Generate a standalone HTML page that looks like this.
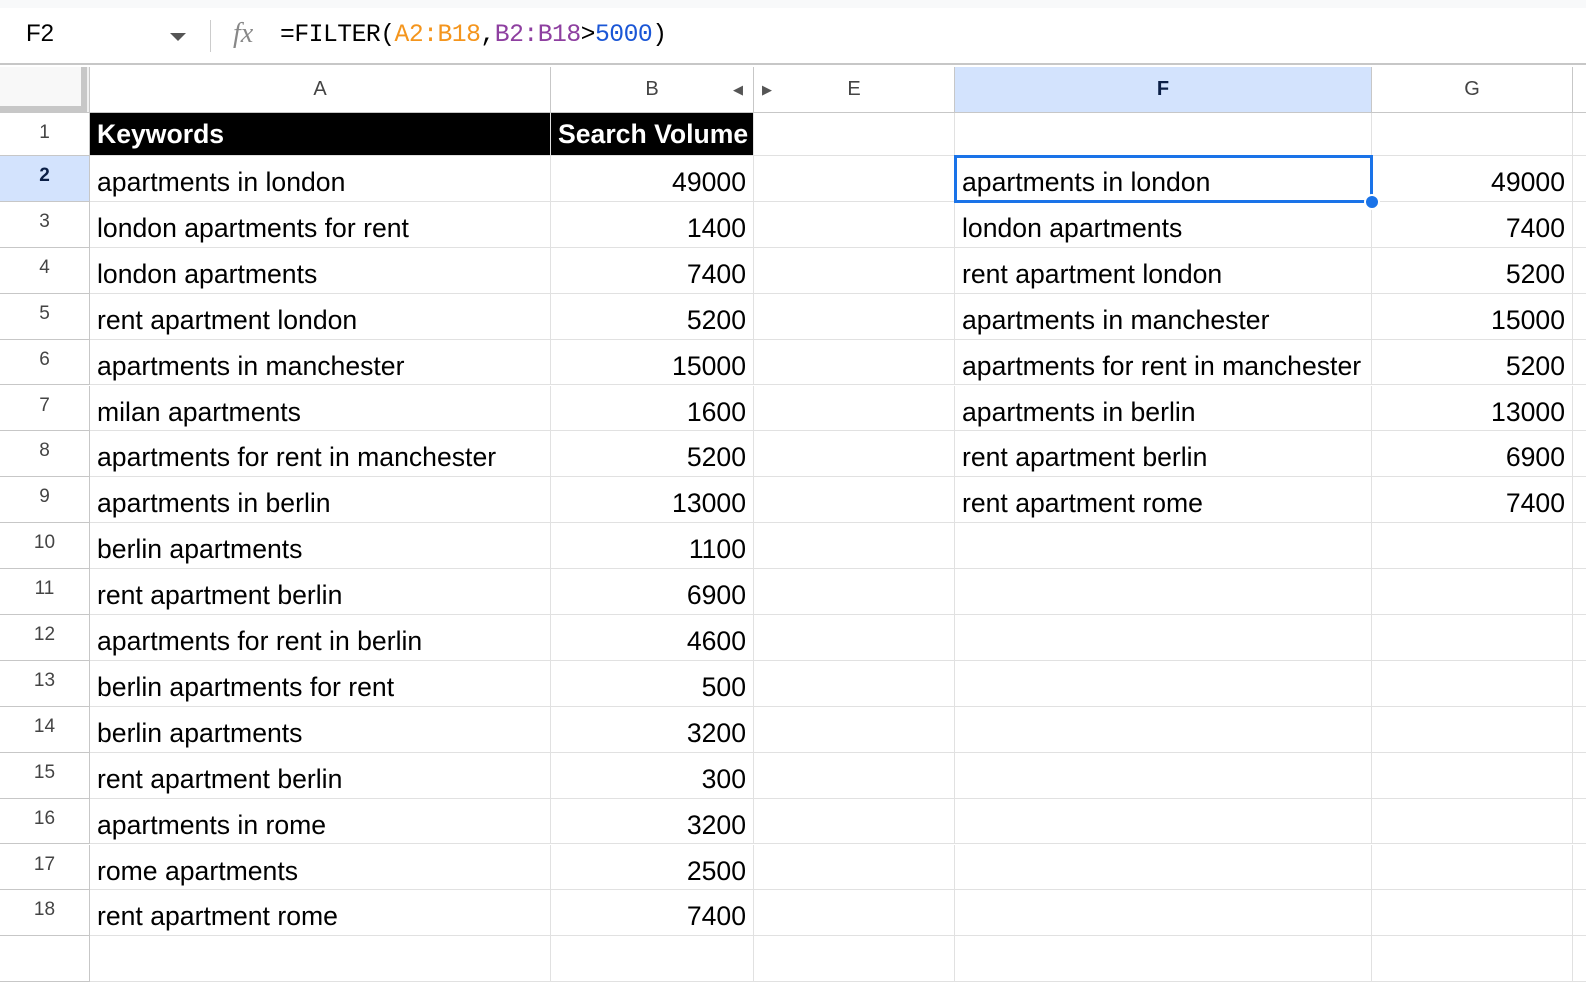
<!DOCTYPE html>
<html><head><meta charset="utf-8"><style>
*{margin:0;padding:0;box-sizing:border-box}
body{width:1586px;height:946px;overflow:hidden;background:#fff;font-family:"Liberation Sans",Arial,sans-serif;position:relative}
.top{position:absolute;left:0;top:0;width:1586px;height:8px;background:#f8f9fa}
.fbar{position:absolute;left:0;top:8px;width:1586px;height:57px;border-bottom:2px solid #c7c7c7}
.hdr{position:absolute;top:67px;height:46px;border-right:1px solid #c7c7c7;border-bottom:1px solid #c7c7c7;color:#444;font-size:20px;text-align:center;line-height:45px;background:#fff}
.cell{position:absolute;border-right:1px solid #e1e1e1;border-bottom:1px solid #e1e1e1;font-size:26.6px;color:#000;white-space:nowrap;overflow:hidden;padding:0 7px;line-height:52px}
.rn{position:absolute;left:0;width:90px;border-right:1px solid #c7c7c7;border-bottom:1px solid #c7c7c7;font-size:19px;color:#444;text-align:center;line-height:40px}
.r{text-align:right}
</style></head><body>
<div class="top"></div>
<div class="fbar">
<div style="position:absolute;left:26px;top:12px;font-size:24px;color:#000">F2</div>
<div style="position:absolute;left:170px;top:25px;width:0;height:0;border-left:8px solid transparent;border-right:8px solid transparent;border-top:8px solid #555"></div>
<div style="position:absolute;left:210px;top:12px;width:1px;height:32px;background:#ccc"></div>
<div style="position:absolute;left:233px;top:10px;font-family:'Liberation Serif',serif;font-style:italic;font-size:28px;color:#888">fx</div>
<div style="position:absolute;left:280px;top:13px;font-family:'Liberation Mono',monospace;font-size:24.7px;color:#000;letter-spacing:-0.5px">=FILTER(<span style="color:#f4951d">A2:B18</span>,<span style="color:#8e3fa0">B2:B18</span>&gt;<span style="color:#1a56d6">5000</span>)</div>
</div>
<div style="position:absolute;left:0;top:67px;width:90px;height:46px;background:#f1f1f1;border-right:1px solid #c7c7c7;border-bottom:1px solid #c7c7c7"><div style="position:absolute;left:0;top:0;background:#f8f8f8;border-right:6px solid #c7c7c7;border-bottom:6px solid #c7c7c7;width:87px;height:45px"></div></div>
<div class="hdr" style="left:90px;width:461px">A</div>
<div class="hdr" style="left:551px;width:203px">B<span style="position:absolute;right:10px;top:0;font-size:13px;color:#555">◀</span></div>
<div class="hdr" style="left:754px;width:201px">E<span style="position:absolute;left:8px;top:0;font-size:13px;color:#555">▶</span></div>
<div class="hdr" style="left:955px;width:417px;background:#d3e3fd;color:#0b1f46;font-weight:bold">F</div>
<div class="hdr" style="left:1372px;width:201px">G</div>
<div class="hdr" style="left:1573px;width:13px;border-right:none"></div>
<div id="g"></div>
<script>
var A=[["apartments in london",49000],["london apartments for rent",1400],["london apartments",7400],["rent apartment london",5200],["apartments in manchester",15000],["milan apartments",1600],["apartments for rent in manchester",5200],["apartments in berlin",13000],["berlin apartments",1100],["rent apartment berlin",6900],["apartments for rent in berlin",4600],["berlin apartments for rent",500],["berlin apartments",3200],["rent apartment berlin",300],["apartments in rome",3200],["rome apartments",2500],["rent apartment rome",7400]];
var F=[["apartments in london",49000],["london apartments",7400],["rent apartment london",5200],["apartments in manchester",15000],["apartments for rent in manchester",5200],["apartments in berlin",13000],["rent apartment berlin",6900],["rent apartment rome",7400]];
var h="";
function row(i,top,ht){
 var sel=i==2;
 h+='<div class="rn" style="top:'+top+'px;height:'+ht+'px;'+(sel?'background:#d3e3fd;color:#0b1f46;font-weight:bold;':'')+'">'+(i<=18?i:'')+'</div>';
 var a="",b="",f="",g="",st="";
 if(i==1){a="Keywords";b="Search Volume";st="background:#000;color:#fff;font-weight:bold;line-height:43px;"}
 else{var d=A[i-2];if(d){a=d[0];b=d[1];}var e=F[i-2];if(e){f=e[0];g=e[1];}}
 var lh='line-height:'+(ht+8)+'px;';
 h+='<div class="cell" style="left:90px;width:461px;top:'+top+'px;height:'+ht+'px;'+lh+st+'">'+a+'</div>';
 h+='<div class="cell r" style="left:551px;width:203px;top:'+top+'px;height:'+ht+'px;'+lh+st+'">'+b+'</div>';
 h+='<div class="cell" style="left:754px;width:201px;top:'+top+'px;height:'+ht+'px"></div>';
 h+='<div class="cell" style="left:955px;width:417px;top:'+top+'px;height:'+ht+'px;'+lh+'">'+f+'</div>';
 h+='<div class="cell r" style="left:1372px;width:201px;top:'+top+'px;height:'+ht+'px;'+lh+'">'+g+'</div>';
 h+='<div class="cell" style="left:1573px;width:13px;top:'+top+'px;height:'+ht+'px;border-right:none"></div>';
}
row(1,113,43);
for(var i=2;i<=19;i++){var t=156+(i-2)*45.9;row(i,t,45.9);}
h+='<div style="position:absolute;left:954px;top:155px;width:419px;height:48px;border:3px solid #1a73e8"></div>';
h+='<div style="position:absolute;left:1364px;top:194px;width:16px;height:16px;border-radius:50%;background:#1a73e8;border:2px solid #fff"></div>';
document.getElementById("g").innerHTML=h;
</script>
</body></html>
